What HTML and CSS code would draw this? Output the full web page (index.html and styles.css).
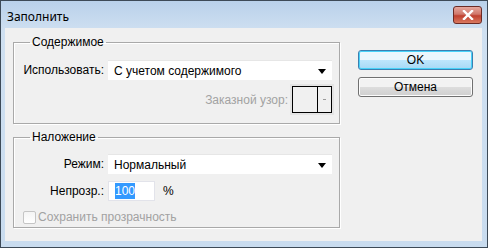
FILE: index.html
```html
<!DOCTYPE html>
<html lang="ru">
<head>
    <meta charset="UTF-8">
    <title>Заполнить</title>
    <link rel="stylesheet" href="styles.css">
</head>
<body>
    <div class="window">
        <div class="titlebar">
            <span class="title">Заполнить</span>
            <span class="close">
                <svg width="12" height="10" viewBox="0 0 12 10">
                    <path d="M2 1 L10 9 M10 1 L2 9" stroke="#fff" stroke-width="2.4" stroke-linecap="square"/>
                </svg>
            </span>
        </div>
        <div class="client">
            <div class="groups">
                <fieldset class="group group-content">
                    <legend>Содержимое</legend>
                    <div class="row">
                        <label class="label">Использовать:</label>
                        <div class="select">С учетом содержимого<span class="arrow"></span></div>
                    </div>
                    <div class="row row-pattern">
                        <span class="label-disabled">Заказной узор:</span>
                        <div class="swatch"><span class="swatch-btn"><i></i></span></div>
                    </div>
                </fieldset>
                <fieldset class="group group-blend">
                    <legend>Наложение</legend>
                    <div class="row">
                        <label class="label">Режим:</label>
                        <div class="select">Нормальный<span class="arrow"></span></div>
                    </div>
                    <div class="row row-opacity">
                        <label class="label">Непрозр.:</label>
                        <div class="input"><span class="sel">100</span></div>
                        <span class="unit">%</span>
                    </div>
                    <div class="check-row">
                        <span class="checkbox"></span>
                        <span class="label-disabled">Сохранить прозрачность</span>
                    </div>
                </fieldset>
            </div>
            <div class="buttons">
                <button class="btn btn-default">OK</button>
                <button class="btn">Отмена</button>
            </div>
        </div>
    </div>
</body>
</html>
```

FILE: styles.css
```css
body {
    margin: 0;
    font-family: "Liberation Sans", Arial, sans-serif;
    font-size: 12px;
    color: #000;
}
.window {
    width: 486px;
    height: 246px;
    border: 1px solid #3d4a57;
    background: linear-gradient(#b9d1ea, #cfe0f1 30px, #c9dcef);
    display: flex;
    flex-direction: column;
}
.titlebar {
    height: 27px;
    display: flex;
    align-items: flex-start;
    justify-content: space-between;
    padding: 0 5px 0 6px;
}
.title {
    margin-top: 9px;
    font-family: "Noto Sans", sans-serif;
    font-size: 12px;
    line-height: 14px;
}
.close {
    margin-top: 5px;
    width: 27px;
    height: 16px;
    border: 1px solid #6b2b25;
    border-radius: 3px;
    background: linear-gradient(#e6a79d, #d0776a 45%, #c0402f 55%, #d97a60);
    display: flex;
    align-items: center;
    justify-content: center;
}
.client {
    flex: 1;
    margin: 0 5px 6px 4px;
    background: #f0f0f0;
    display: flex;
    padding: 7px 0 0 8px;
}
.groups {
    display: flex;
    flex-direction: column;
    gap: 6px;
}
.group {
    width: 312px;
    margin: 0;
    padding: 0 7px 0 0;
    border: 1px solid #a9a9a9;
    box-shadow: 1px 1px 0 #fff, inset 1px 1px 0 #fff;
}
.group legend {
    margin-left: 16px;
    padding: 0 2px;
    line-height: 14px;
}
.group-content {
    padding-top: 11px;
    padding-bottom: 10px;
}
.group-blend {
    padding-top: 10px;
    padding-bottom: 3px;
}
.row {
    display: flex;
    align-items: center;
    gap: 4px;
    height: 20px;
}
.label {
    width: 90px;
    text-align: right;
}
.select {
    position: relative;
    width: 224px;
    height: 20px;
    line-height: 20px;
    padding-left: 6px;
    box-sizing: border-box;
    background: #fff;
    border-top: 1px solid #e6e6e6;
}
.arrow {
    position: absolute;
    right: 6px;
    top: 8px;
    border-left: 4px solid transparent;
    border-right: 4px solid transparent;
    border-top: 5px solid #000;
}
.row-pattern {
    margin-top: 6px;
    height: 27px;
    justify-content: flex-end;
    gap: 4px;
}
.label-disabled {
    color: #a2a2a2;
}
.swatch {
    width: 40px;
    height: 27px;
    box-sizing: border-box;
    border: 1px solid #000;
    box-shadow: 0 0 0 2px #e4e4e4;
    display: flex;
    justify-content: flex-end;
}
.swatch-btn {
    width: 13px;
    border-left: 1px solid #000;
    display: flex;
    align-items: center;
    justify-content: center;
}
.swatch-btn i {
    width: 3px;
    height: 1px;
    background: #9a9a9a;
}
.row-opacity {
    margin-top: 7px;
}
.input {
    width: 47px;
    height: 20px;
    box-sizing: border-box;
    background: #fff;
    border: 1px solid #e2e3ea;
    padding: 2px 0 0 6px;
}
.sel {
    background: #3399ff;
    color: #fff;
    padding: 1px 0;
}
.unit {
    margin-left: 4px;
}
.check-row {
    display: flex;
    align-items: center;
    gap: 2px;
    margin: 9px 0 0 9px;
    height: 14px;
}
.checkbox {
    width: 11px;
    height: 11px;
    border: 1px solid #c5c5c5;
    border-radius: 2px;
    background: linear-gradient(#f4f4f4, #fff);
}
.buttons {
    display: flex;
    flex-direction: column;
    gap: 7px;
    margin: 15px 0 0 18px;
}
.btn {
    width: 115px;
    height: 20px;
    padding: 0;
    font: inherit;
    border: 1px solid #707070;
    border-radius: 3px;
    background: linear-gradient(#f2f2f2 50%, #dddddd 50%, #cfcfcf);
    box-shadow: inset 0 0 0 1px #fcfcfc;
}
.btn-default {
    border-color: #3c7fb1;
    background: linear-gradient(#eaf6fd 50%, #bee6fd 50%, #a7d9f5);
    box-shadow: inset 0 0 0 1px #48d2f9;
}
```
